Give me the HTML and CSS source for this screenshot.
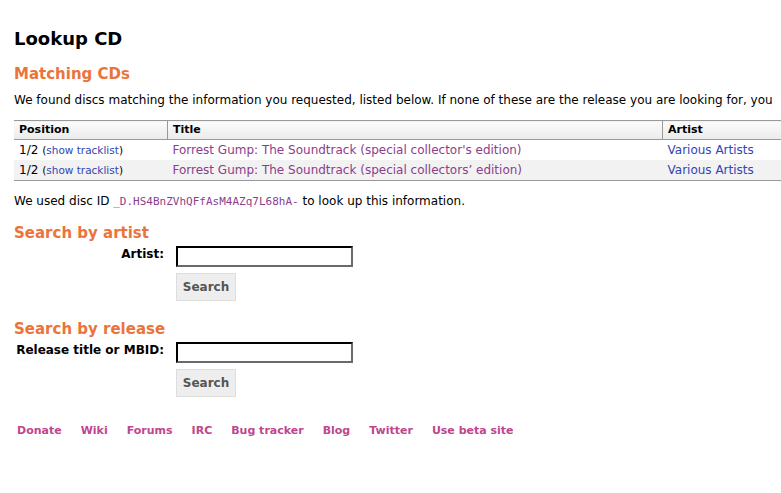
FILE: index.html
```html
<!DOCTYPE html>
<html lang="en">
<head>
  <meta charset="UTF-8" />
  <title>Lookup CD</title>
  <link rel="stylesheet" href="styles.css">
</head>
<body>
  <div class="page">
    <h1>Lookup CD</h1>
    <h2 class="first">Matching CDs</h2>
    <p>We found discs matching the information you requested, listed below. If none of these are the release you are looking for, you</p>
    <table class="results">
      <thead>
        <tr>
          <th class="pos">Position</th>
          <th class="title">Title</th>
          <th>Artist</th>
        </tr>
      </thead>
      <tbody>
        <tr>
          <td>1/2 <span class="small">(<a href="#">show tracklist</a>)</span></td>
          <td><a class="visited" href="#">Forrest Gump: The Soundtrack (special collector's edition)</a></td>
          <td><a href="#">Various Artists</a></td>
        </tr>
        <tr class="even">
          <td>1/2 <span class="small">(<a href="#">show tracklist</a>)</span></td>
          <td><a class="visited" href="#">Forrest Gump: The Soundtrack (special collectors’ edition)</a></td>
          <td><a href="#">Various Artists</a></td>
        </tr>
      </tbody>
    </table>
    <p class="discid">We used disc ID <code>_D.HS4BnZVhQFfAsM4AZq7L68hA-</code> to look up this information.</p>

    <h2>Search by artist</h2>
    <form class="search">
      <div class="row">
        <label for="artist">Artist:</label>
        <input type="text" id="artist" />
      </div>
      <div class="row">
        <span></span>
        <button type="button">Search</button>
      </div>
    </form>

    <h2>Search by release</h2>
    <form class="search">
      <div class="row">
        <label for="release">Release title or MBID:</label>
        <input type="text" id="release" />
      </div>
      <div class="row">
        <span></span>
        <button type="button">Search</button>
      </div>
    </form>

    <div class="footer">
      <a href="#">Donate</a>
      <a href="#">Wiki</a>
      <a href="#">Forums</a>
      <a href="#">IRC</a>
      <a href="#">Bug tracker</a>
      <a href="#">Blog</a>
      <a href="#">Twitter</a>
      <a href="#">Use beta site</a>
    </div>
  </div>
</body>
</html>
```

FILE: styles.css
```css
html, body {
  overflow: hidden;
}
body {
  margin: 0;
  font-family: "DejaVu Sans", Verdana, sans-serif;
  font-size: 12px;
  color: #000;
  background: #fff;
}
.page {
  width: 1000px;
  padding: 28px 0 0 14px;
}
h1 {
  font-size: 18px;
  margin: 0 0 14px;
  line-height: 22px;
}
h2 {
  color: #eb743b;
  font-size: 15px;
  margin: 0 0 3px;
  line-height: 20px;
}
h2.first {
  margin-bottom: 8px;
}
p {
  margin: 0 0 12px;
  line-height: 16px;
  white-space: nowrap;
}
a {
  color: #3344b4;
  text-decoration: none;
}
a.visited {
  color: #8c3d8c;
}
.results {
  border-collapse: collapse;
  width: 900px;
  border-top: 1px solid #999;
  border-bottom: 1px solid #999;
  margin-bottom: 12px;
}
.results th {
  text-align: left;
  font-size: 11px;
  padding: 1px 5px 2px;
  line-height: 15px;
  background: linear-gradient(#fbfbfb, #ebebeb);
  border-bottom: 1px solid #999;
  border-left: 1px solid #999;
}
.results th.pos {
  width: 143px;
  border-left: none;
}
.results th.title {
  width: 484px;
}
.results td {
  padding: 2px 5px;
  line-height: 16px;
}
.results tr.even td {
  background: #f2f2f2;
}
.small {
  font-size: 10.5px;
}
code {
  font-family: "DejaVu Sans Mono", monospace;
  font-size: 11px;
  color: #8c3d8c;
}
.discid {
  margin-bottom: 13px;
}
.search {
  margin: 0 0 18px;
}
.search .row {
  display: grid;
  grid-template-columns: 150px auto;
  column-gap: 12px;
  align-items: center;
  justify-items: start;
  margin-bottom: 6px;
}
.search label {
  justify-self: end;
  align-self: start;
  line-height: 16px;
  font-weight: bold;
}
.search input {
  width: 169px;
  height: 15px;
  border: 2px inset #767676;
  border-color: #1a1a1a #6a6a6a #6a6a6a #1a1a1a;
  padding: 1px 2px;
  margin: 0;
}
.search button {
  font-family: inherit;
  font-size: 12px;
  font-weight: bold;
  color: #555;
  background: #eee;
  border: 1px solid #ddd;
  width: 60px;
  height: 28px;
  padding: 0;
}
.footer {
  display: flex;
  gap: 19px;
  padding: 9px 3px;
  font-size: 11px;
  line-height: 14px;
  font-weight: bold;
}
.footer a {
  color: #c0458f;
}
```
